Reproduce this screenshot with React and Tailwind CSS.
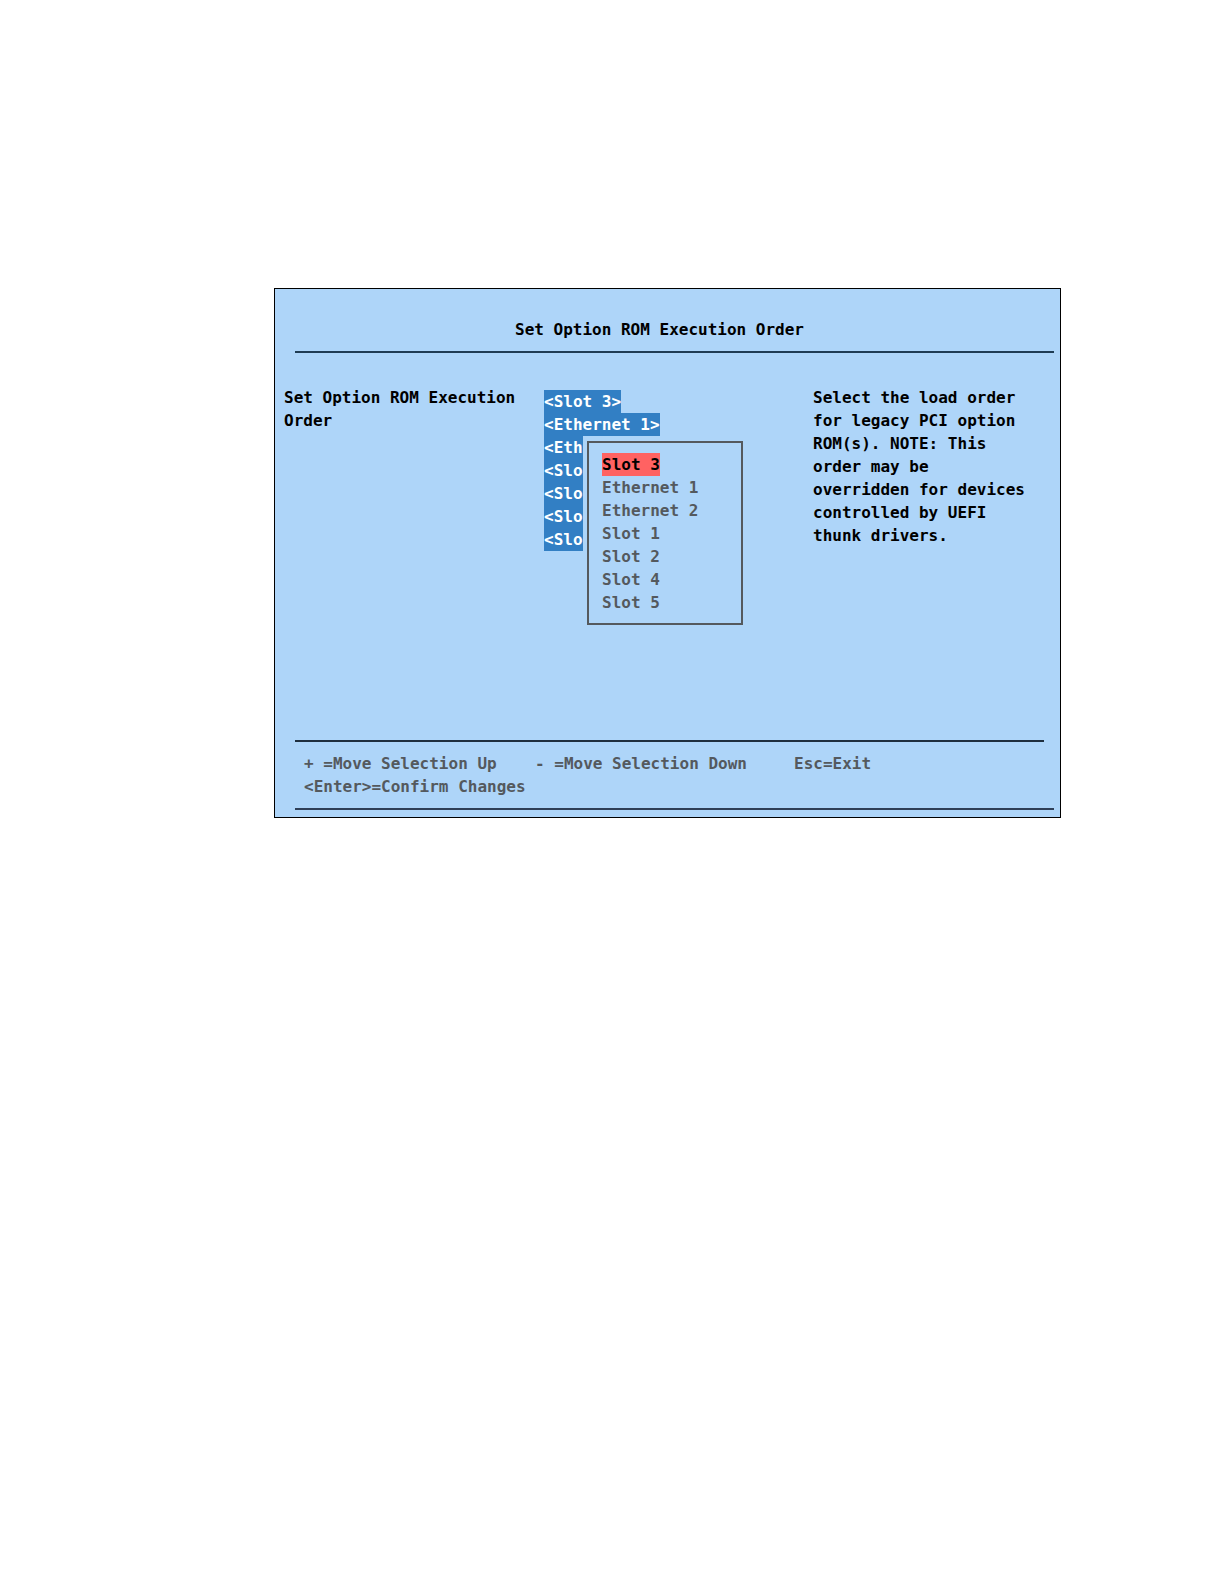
import { useEffect, useState } from 'react';
import clsx from 'clsx';

const DEVICES = ['Slot 3', 'Ethernet 1', 'Ethernet 2', 'Slot 1', 'Slot 2', 'Slot 4', 'Slot 5'];

// The popup starts at this row and column of the value list,
// so the characters behind it are not printed while it is open
const POPUP_ROW = 2;
const POPUP_COL = 4;

const Rule = ({ className }) => <hr className={clsx('ml-5 border-0 h-[2px]', className)} />;

// Popup used to reorder the list, drawn over the current values
const OrderPopup = ({ order, selected, onSelect }) => (
    <div className="absolute top-[46px] left-[39px] pt-[5px] px-1 pb-1 bg-[#aed5f9]">
        <ul className="w-[156px] border-2 border-[#54595e] pt-[10px] pb-[9px] pl-[13px]">
            {order.map((name) => (
                <li key={name} className="flex">
                    <button
                        type="button"
                        onClick={() => onSelect(name)}
                        className={clsx(
                            'font-bold leading-[23px]',
                            name === selected ? 'bg-[#ff6262] text-black' : 'text-[#54595e]'
                        )}
                    >
                        {name}
                    </button>
                </li>
            ))}
        </ul>
    </div>
);

const App = () => {
    const [values, setValues] = useState(DEVICES);
    const [order, setOrder] = useState(DEVICES);
    const [selected, setSelected] = useState(DEVICES[0]);
    const [open, setOpen] = useState(true);

    useEffect(() => {
        const move = (step) => {
            const from = order.indexOf(selected);
            const to = from + step;
            if (to < 0 || to >= order.length) return;
            const next = [...order];
            next.splice(from, 1);
            next.splice(to, 0, selected);
            setOrder(next);
        };

        const onKey = (e) => {
            if (!open) return;
            if (e.key === '+') move(-1);
            if (e.key === '-') move(1);
            if (e.key === 'Enter') {
                e.preventDefault();
                setValues(order);
                setOpen(false);
            }
            if (e.key === 'Escape') {
                setOrder(values);
                setOpen(false);
            }
        };

        window.addEventListener('keydown', onKey);
        return () => window.removeEventListener('keydown', onKey);
    }, [open, order, values, selected]);

    const valueLabel = (name, row) => {
        const label = `<${name}>`;
        return open && row >= POPUP_ROW ? label.slice(0, POPUP_COL) : label;
    };

    return (
        <div className="bg-white pt-72 pb-10 pl-[274px] pr-[163px]">
            <main className="border border-black bg-[#aed5f9] pb-[7px] text-base leading-[23px] font-bold text-black font-['DejaVu_Sans_Mono',monospace]">
                <header className="pt-[29px]">
                    <h1 className="text-center pb-[10px] pr-4">Set Option ROM Execution Order</h1>
                    <Rule className="mr-[6px] bg-[#1f3c54]" />
                </header>

                <section className="flex min-h-[387px] pt-[33px] pl-[9px]">
                    <h2 className="w-[260px] shrink-0 pr-5">Set Option ROM Execution Order</h2>

                    <div className="flex-1 pt-1">
                        <div className="relative">
                            <ul>
                                {values.map((name, row) => (
                                    <li key={name} className="flex">
                                        <button
                                            type="button"
                                            aria-label={name}
                                            onClick={() => setOpen(true)}
                                            className="bg-[#327fc4] text-white leading-[23px]"
                                        >
                                            {valueLabel(name, row)}
                                        </button>
                                    </li>
                                ))}
                            </ul>
                            {open && <OrderPopup order={order} selected={selected} onSelect={setSelected} />}
                        </div>
                    </div>

                    <p className="w-[247px] shrink-0 pr-8">
                        Select the load order for legacy PCI option ROM(s). NOTE: This order may be
                        overridden for devices controlled by UEFI thunk drivers.
                    </p>
                </section>

                {/* Key help */}
                <footer className="text-[#54595e]">
                    <Rule className="mr-4 bg-[#1f2f3f]" />
                    <div className="flex flex-wrap pt-[10px] pb-[10px] pl-[29px]">
                        <span className="w-[231px]">+ =Move Selection Up</span>
                        <span className="w-[259px]">- =Move Selection Down</span>
                        <span>Esc=Exit</span>
                        <span className="w-full">{'<Enter>=Confirm Changes'}</span>
                    </div>
                    <Rule className="mr-[6px] bg-[#2f3f58]" />
                </footer>
            </main>
        </div>
    );
};

export default App;
